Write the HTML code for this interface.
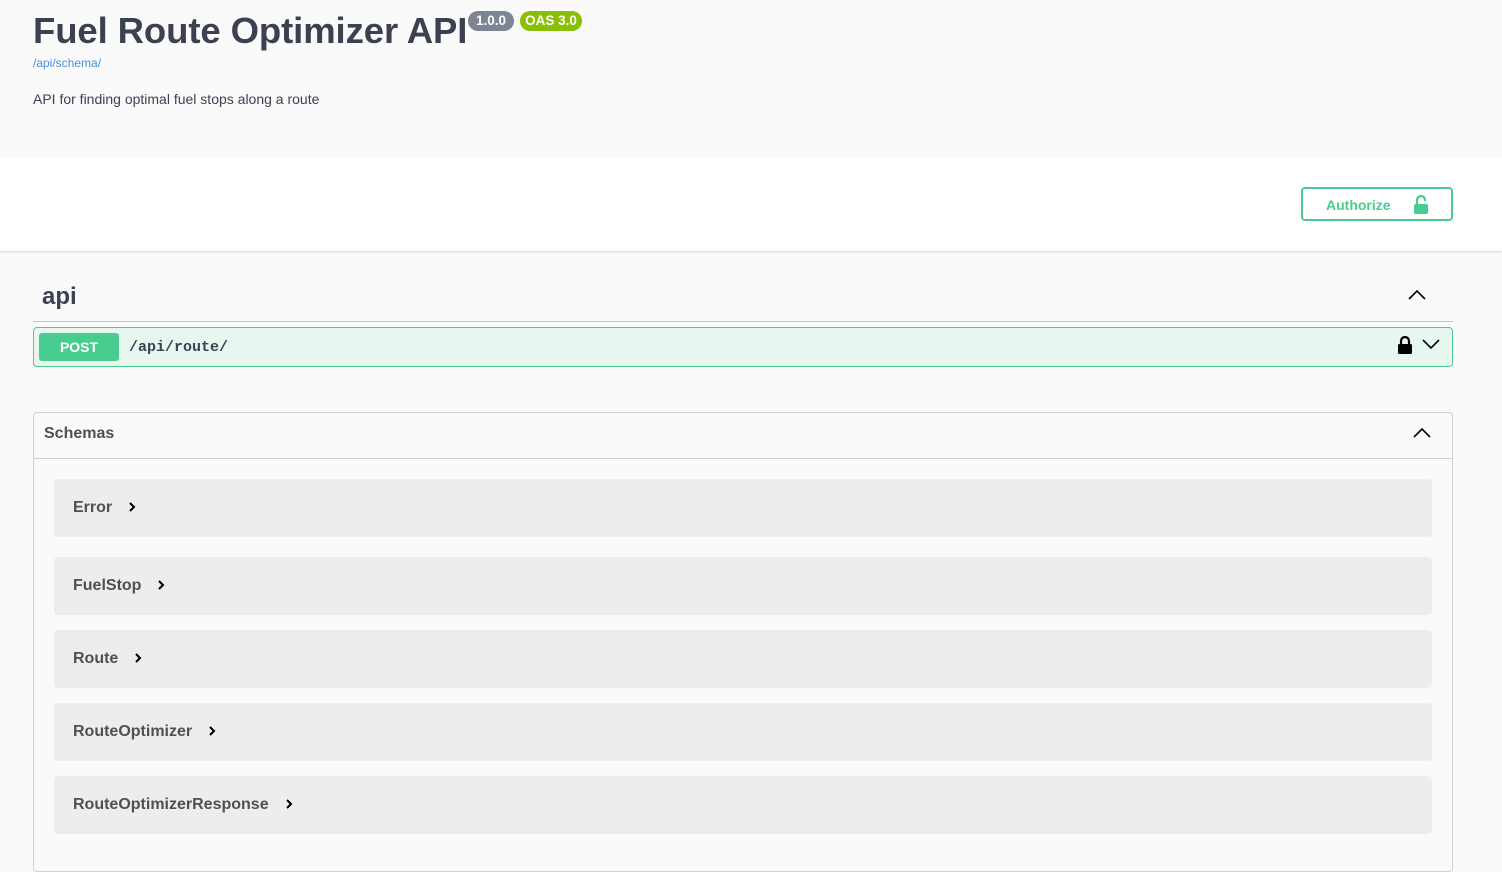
<!DOCTYPE html>
<html><head><meta charset="utf-8"><style>
*{box-sizing:border-box;margin:0;padding:0}
body{width:1502px;height:844px;overflow:hidden;background:#fafafa;font-family:"Liberation Sans",Arial,sans-serif;color:#3b4151;position:relative}
.abs{position:absolute}
h1{position:absolute;left:33px;top:10px;font-size:36.5px;font-weight:bold;color:#3b4151;letter-spacing:-0.1px}
.badge{position:absolute;top:11px;height:20px;border-radius:10px;color:#fff;font-weight:bold;font-size:13.5px;line-height:20px;text-align:center}
.top{position:absolute;left:0;top:0;width:1502px;height:157px;background:#fafafa}
.scheme{position:absolute;left:0;top:157px;width:1502px;height:94px;background:#fff;box-shadow:0 1px 2px rgba(0,0,0,.15)}
.auth{position:absolute;left:1301px;top:187px;width:152px;height:34px;border:2px solid #49cc90;border-radius:4px;color:#49cc90;font-weight:bold;font-size:14px;line-height:32px;padding-left:23px}
.op{position:absolute;left:33px;top:327px;width:1420px;height:40px;background:#e8f6f0;border:1px solid #49cc90;border-radius:4px}
.post{position:absolute;left:5px;top:5px;width:80px;height:28px;background:#49cc90;border-radius:3px;color:#fff;font-weight:bold;font-size:14px;text-align:center;line-height:28px}
.path{position:absolute;left:95px;top:11px;font-family:"Liberation Mono",monospace;font-weight:bold;font-size:15px;color:#3b4151}
.schemas{position:absolute;left:33px;top:412px;width:1420px;height:460px;border:1px solid #d0d0d0;border-radius:4px;background:#fafafa}
.sh{height:46px;border-bottom:1px solid #d0d0d0;font-weight:bold;font-size:16px;padding:12px 0 0 10px;color:#505050}
.m{position:absolute;left:20px;width:1378px;height:58px;background:#ededed;border-radius:4px;font-weight:bold;font-size:16px;color:#505050;padding:20px 0 0 19px}
.m svg{margin-left:16px;vertical-align:-1px}
</style></head><body>
<div class="top"></div>
<h1>Fuel Route Optimizer API</h1>
<div class="badge" style="left:468px;width:46px;background:#7d8492">1.0.0</div>
<div class="badge" style="left:520px;width:62px;background:#89bf04">OAS 3.0</div>
<div class="abs" style="left:33px;top:56px;font-size:12px;color:#4990e2">/api/schema/</div>
<div class="abs" style="left:33px;top:91px;font-size:14px;color:#3b4151">API for finding optimal fuel stops along a route</div>
<div class="scheme"></div>
<div class="auth">Authorize
<svg class="abs" style="left:110px;top:6px" width="16" height="20" viewBox="0 0 16 20"><path d="M4 9V5a4 4 0 0 1 8 0v1" stroke="#49cc90" stroke-width="2.2" fill="none"/><rect x="1" y="9" width="14" height="10" rx="2" fill="#49cc90"/></svg></div>
<div class="abs" style="left:42px;top:283px;font-size:24px;font-weight:bold;color:#3b4151">api</div>
<svg class="abs" style="left:1407px;top:288px" width="20" height="14"><path d="M2 11L10 3L18 11" stroke="#000" stroke-width="1.6" fill="none"/></svg>
<div class="abs" style="left:33px;top:321px;width:1420px;height:1px;background:#c4c4c4"></div>
<div class="op"><div class="post">POST</div><div class="path">/api/route/</div>
<svg class="abs" style="left:1363px;top:7px" width="16" height="20" viewBox="0 0 16 20"><path d="M4 9V6a4 4 0 0 1 8 0v3" stroke="#000" stroke-width="2.2" fill="none"/><rect x="1" y="9" width="14" height="10" rx="1.5" fill="#000"/></svg>
<svg class="abs" style="left:1387px;top:9px" width="20" height="14"><path d="M2 3L10 11L18 3" stroke="#000" stroke-width="1.6" fill="none"/></svg>
</div>
<div class="schemas"><div class="sh">Schemas</div>
<svg class="abs" style="left:1378px;top:13px" width="20" height="14"><path d="M2 11L10 3L18 11" stroke="#000" stroke-width="1.6" fill="none"/></svg>
<div class="m" style="top:66px">Error<svg width="8" height="12"><path d="M2 2L6 6L2 10" stroke="#000" stroke-width="2" fill="none"/></svg></div>
<div class="m" style="top:144px">FuelStop<svg width="8" height="12"><path d="M2 2L6 6L2 10" stroke="#000" stroke-width="2" fill="none"/></svg></div>
<div class="m" style="top:217px">Route<svg width="8" height="12"><path d="M2 2L6 6L2 10" stroke="#000" stroke-width="2" fill="none"/></svg></div>
<div class="m" style="top:290px">RouteOptimizer<svg width="8" height="12"><path d="M2 2L6 6L2 10" stroke="#000" stroke-width="2" fill="none"/></svg></div>
<div class="m" style="top:363px">RouteOptimizerResponse<svg width="8" height="12"><path d="M2 2L6 6L2 10" stroke="#000" stroke-width="2" fill="none"/></svg></div>
</div>
</body></html>
